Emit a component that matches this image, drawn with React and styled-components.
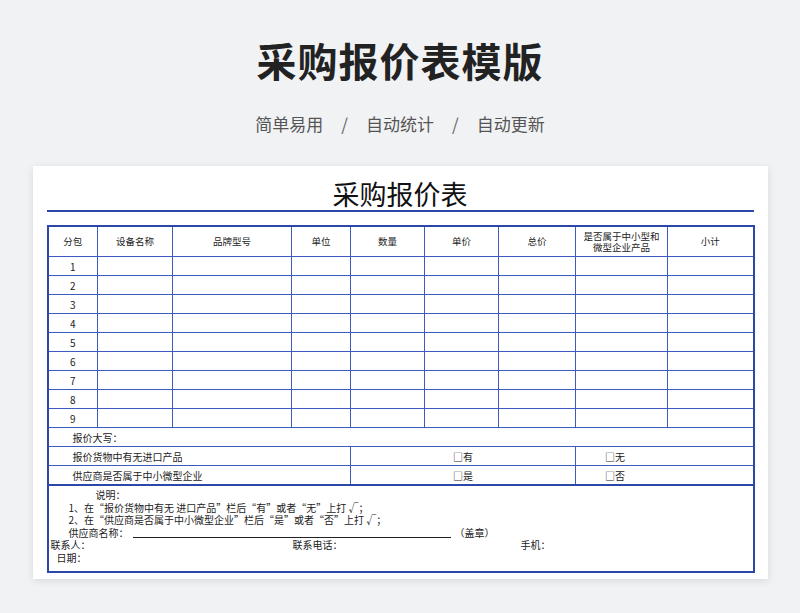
import React from "react";
import styled, { createGlobalStyle } from "styled-components";

const Global = createGlobalStyle`
  body { margin:0; background:#f1f2f4; font-family:"Noto Sans CJK SC","Noto Sans",sans-serif; }
`;
const Page = styled.div`width:800px;height:613px;display:flex;flex-direction:column;align-items:center;overflow:hidden;`;
const Title = styled.h1`margin:32px 0 0;font-size:40px;font-weight:700;color:#222;line-height:56px;letter-spacing:1px;`;
const Sub = styled.div`margin-top:24px;display:flex;gap:12px;font-size:17px;color:#555;line-height:24px;`;
const Slash = styled.span`color:#666;margin:0 6px;`;
const Card = styled.div`margin-top:30px;width:735px;height:413px;background:#fff;box-shadow:0 2px 8px rgba(0,0,0,.1);padding:12px 14px 0;box-sizing:border-box;font-size:10px;color:#222;`;
const SheetTitle = styled.div`text-align:center;font-size:27px;line-height:32px;color:#111;border-bottom:2px solid #2b47a8;`;
const Table = styled.table`margin-top:13px;width:706px;border-collapse:collapse;border:2px solid #2b47a8;table-layout:fixed;`;
const Td = styled.td`border:1px solid #3d5bbf;height:${p => p.$h || 18}px;padding:0;text-align:${p => p.$align || "center"};padding-left:${p => p.$pl || 0}px;line-height:11px;font-size:10px;`;
const HeadTd = styled(Td)`font-size:9.5px;line-height:11px;`;
const Notes = styled.td`border-top:2px solid #2b47a8;padding:3px 0 0 2px;height:82px;vertical-align:top;line-height:12.5px;font-size:10px;`;
const Line = styled.div`padding-left:${p => p.$pl || 0}px;display:flex;white-space:nowrap;`;
const Cell = styled.span`width:${p => p.$w}px;`;
const Under = styled.span`display:inline-block;width:318px;border-bottom:1px solid #222;margin:0 4px;height:10px;`;

const widths = [50, 75, 119, 59, 74, 74, 77, 92, 86];
const heads = ["分包", "设备名称", "品牌型号", "单位", "数量", "单价", "总价", "", "小计"];

export default function App() {
  return (
    <Page>
      <Global />
      <Title>采购报价表模版</Title>
      <Sub><span>简单易用</span><Slash>/</Slash><span>自动统计</span><Slash>/</Slash><span>自动更新</span></Sub>
      <Card>
        <SheetTitle>采购报价表</SheetTitle>
        <Table>
          <colgroup>{widths.map((w, i) => <col key={i} style={{ width: w }} />)}</colgroup>
          <tbody>
            <tr>{heads.map((h, i) => <HeadTd key={i} $h={29}>{i === 7 ? <>是否属于中小型和<br />微型企业产品</> : h}</HeadTd>)}</tr>
            {[1,2,3,4,5,6,7,8,9].map(n => (
              <tr key={n}>{widths.map((_, i) => <Td key={i}>{i === 0 ? n : ""}</Td>)}</tr>
            ))}
            <tr><Td colSpan={9} $align="left" $pl={24}>报价大写：</Td></tr>
            <tr><Td colSpan={4} $align="left" $pl={24}>报价货物中有无进口产品</Td><Td colSpan={3}>□有</Td><Td colSpan={2} $align="left" $pl={29}>□无</Td></tr>
            <tr><Td colSpan={4} $align="left" $pl={24}>供应商是否属于中小微型企业</Td><Td colSpan={3}>□是</Td><Td colSpan={2} $align="left" $pl={29}>□否</Td></tr>
            <tr><Notes colSpan={9}>
              <Line $pl={45}>说明：</Line>
              <Line $pl={18}>1、在“报价货物中有无 进口产品”栏后“有”或者“无”上打 √；</Line>
              <Line $pl={18}>2、在“供应商是否属于中小微型企业”栏后“是”或者“否”上打 √；</Line>
              <Line $pl={18}>供应商名称：<Under />（盖章）</Line>
              <Line><Cell $w={242}>联系人：</Cell><Cell $w={228}>联系电话：</Cell><span>手机：</span></Line>
              <Line $pl={6}>日期：</Line>
            </Notes></tr>
          </tbody>
        </Table>
      </Card>
    </Page>
  );
}
